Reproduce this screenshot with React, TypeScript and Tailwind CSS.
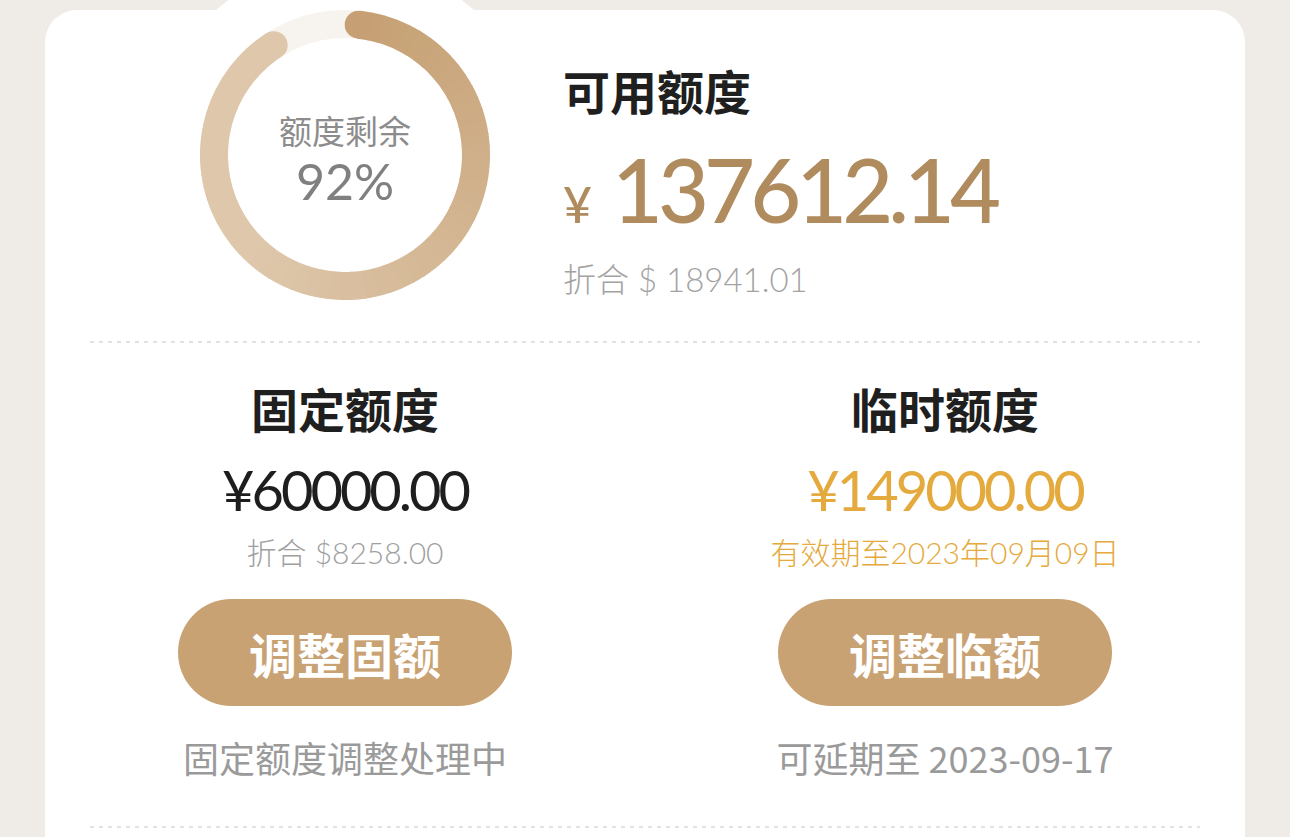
import React from 'react';

const cjk = { fontFamily: '"Noto Sans CJK SC", "Noto Sans", sans-serif' };
const num = { fontFamily: 'Lato, "Noto Sans CJK SC", sans-serif' };

const R = 131;
const point = (deg: number) => {
  const a = (deg * Math.PI) / 180;
  return [145 + R * Math.sin(a), 145 - R * Math.cos(a)];
};

// arc colour runs from dark gold at the start to pale sand by the bottom-left
const arcColor = (t: number) => {
  const from = [198, 160, 116];
  const to = [222, 199, 171];
  const k = Math.min(1, t * 1.5);
  const c = from.map((v, i) => Math.round(v + (to[i] - v) * k));
  return `rgb(${c[0]},${c[1]},${c[2]})`;
};

const START = 6;
const END = 327;
const STEPS = 64;

const segments = Array.from({ length: STEPS }, (_, i) => {
  const a0 = START + ((END - START) * i) / STEPS;
  const a1 = START + ((END - START) * (i + 1)) / STEPS + (i < STEPS - 1 ? 0.6 : 0);
  const [x0, y0] = point(a0);
  const [x1, y1] = point(a1);
  return { d: `M ${x0.toFixed(2)} ${y0.toFixed(2)} A ${R} ${R} 0 0 1 ${x1.toFixed(2)} ${y1.toFixed(2)}`, c: arcColor(i / STEPS) };
});

const Ring = () => {
  const [sx, sy] = point(START);
  const [ex, ey] = point(END);
  return (
    <div className="relative w-[290px] h-[290px] shrink-0">
      <div className="absolute left-[-49px] top-[-49px] w-[388px] h-[388px] rounded-full bg-white" />
      <svg className="absolute inset-0" width="290" height="290" viewBox="0 0 290 290">
        <circle cx="145" cy="145" r={R} fill="none" stroke="#f7f3ee" strokeWidth="28" />
        {segments.map((s, i) => (
          <path key={i} d={s.d} fill="none" stroke={s.c} strokeWidth="28" />
        ))}
        <circle cx={sx} cy={sy} r="14" fill={arcColor(0)} />
        <circle cx={ex} cy={ey} r="14" fill={arcColor(1)} />
      </svg>
      <div className="absolute inset-0 flex flex-col items-center justify-center pt-[10px]">
        <span className="text-[33px] leading-[42px] text-[#8c8c8c]" style={cjk}>
          额度剩余
        </span>
        <span className="text-[50px] leading-[60px] text-[#808080]" style={num}>
          92%
        </span>
      </div>
    </div>
  );
};

const Dashed = () => (
  <div className="relative h-[2px] mx-[45px] bg-[linear-gradient(to_right,#e2e2e2_40%,transparent_0)] bg-[length:9px_2px]" />
);

interface Quota {
  title: string;
  amount: string;
  amountColor: string;
  sub: string;
  subColor: string;
  button: string;
  note: string;
}

const quotas: Quota[] = [
  {
    title: '固定额度',
    amount: '¥60000.00',
    amountColor: 'text-[#1e1e1e]',
    sub: '折合 $8258.00',
    subColor: 'text-[#a0a0a0]',
    button: '调整固额',
    note: '固定额度调整处理中',
  },
  {
    title: '临时额度',
    amount: '¥149000.00',
    amountColor: 'text-[#e4aa3d]',
    sub: '有效期至2023年09月09日',
    subColor: 'text-[#e4aa3d]',
    button: '调整临额',
    note: '可延期至 2023-09-17',
  },
];

export default function App() {
  return (
    <div className="w-[1290px] h-[837px] overflow-hidden bg-[#efebe6]">
      <div className="ml-[45px] mt-[10px] w-[1200px] h-[900px] rounded-[32px] bg-white relative">
        <div className="flex pl-[155px]">
          <Ring />
          <div className="relative ml-[73px] pt-[50px]">
            <div className="text-[47px] leading-[60px] font-bold text-[#1f1f1f]" style={cjk}>
              可用额度
            </div>
            <div className="flex items-baseline mt-[29px] text-[#b08b5e]" style={num}>
              <span className="text-[50px] leading-[80px] font-medium">¥</span>
              <span className="text-[88px] leading-[80px] ml-[20px] tracking-[-5px] font-medium">
                137612.14
              </span>
            </div>
            <div className="text-[33px] leading-[44px] text-[#a3a3a3] mt-[12px] font-light" style={num}>
              <span style={cjk}>折合</span> $ 18941.01
            </div>
          </div>
        </div>

        <div className="mt-[40px]">
          <Dashed />
        </div>

        <div className="grid grid-cols-2 pt-[35px] pb-[45px]">
          {quotas.map((q) => (
            <div key={q.title} className="flex flex-col items-center">
              <div className="text-[47px] leading-[60px] font-bold text-[#1f1f1f]" style={cjk}>
                {q.title}
              </div>
              <div
                className={`text-[56px] leading-[64px] mt-[20px] tracking-[-3px] ${q.amountColor}`}
                style={num}
              >
                {q.amount}
              </div>
              <div className={`text-[30px] leading-[36px] mt-[12px] font-light ${q.subColor}`} style={num}>
                {q.sub}
              </div>
              <button
                className="mt-[29px] w-[334px] h-[107px] rounded-full bg-[#c9a274] text-white text-[48px] font-bold"
                style={cjk}
              >
                {q.button}
              </button>
              <div className="text-[36px] leading-[48px] text-[#9a9a9a] mt-[27px]" style={cjk}>
                {q.note}
              </div>
            </div>
          ))}
        </div>

        <Dashed />
      </div>
    </div>
  );
}
